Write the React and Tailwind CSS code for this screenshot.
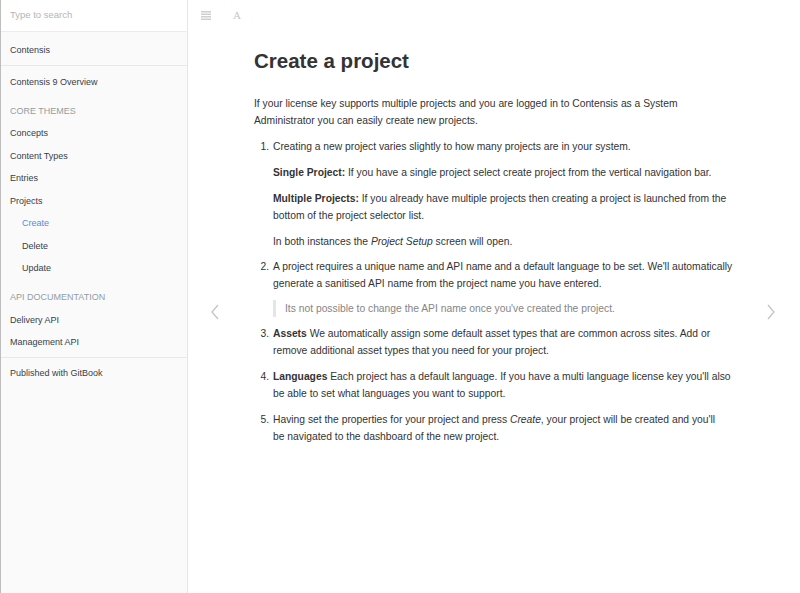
import React from "react";

const font = { fontFamily: '"Liberation Sans", Arial, sans-serif' };

function NavItem({ children, active, sub }) {
    return (
        <li
            className={
                "py-[5.75px] leading-[11px] text-[9px] " +
                (sub ? "pl-[21px] " : "pl-[9px] ") +
                (active ? "text-[#4a8fe7]" : "text-[#364149]")
            }
        >
            {children}
        </li>
    );
}

function NavHeader({ children }) {
    return (
        <li className="mt-[6.5px] py-[5.75px] pl-[9px] leading-[11px] text-[9px] uppercase text-[#939da3]">
            {children}
        </li>
    );
}

function Divider() {
    return <li className="mt-[3.4px] mb-[4.4px] h-px bg-[#e8e8e8]" />;
}

function Sidebar() {
    return (
        <div className="w-[188px] shrink-0 h-[593px] bg-[#fafafa] border-r border-[#e6e6e6] border-l border-l-[#bdbdbd]">
            <div className="h-[32px] bg-white border-b border-[#ececec] flex items-center pl-[9px] text-[9.5px] text-[#b5b5b5]">
                Type to search
            </div>
            <ul className="pt-[7.5px]">
                <NavItem>Contensis</NavItem>
                <Divider />
                <NavItem>Contensis 9 Overview</NavItem>
                <NavHeader>Core Themes</NavHeader>
                <NavItem>Concepts</NavItem>
                <NavItem>Content Types</NavItem>
                <NavItem>Entries</NavItem>
                <NavItem>Projects</NavItem>
                <NavItem sub active>Create</NavItem>
                <NavItem sub>Delete</NavItem>
                <NavItem sub>Update</NavItem>
                <NavHeader>API Documentation</NavHeader>
                <NavItem>Delivery API</NavItem>
                <NavItem>Management API</NavItem>
                <Divider />
                <NavItem>Published with GitBook</NavItem>
            </ul>
        </div>
    );
}

function Chevron({ left }) {
    return (
        <svg width="10" height="16" viewBox="0 0 10 16" fill="none" stroke="#c4c4c4" strokeWidth="1.3">
            {left ? <path d="M8 1 L2 8 L8 15" /> : <path d="M2 1 L8 8 L2 15" />}
        </svg>
    );
}

function Num({ n }) {
    return <span className="w-[19px] shrink-0 text-right pr-[4px]">{n}.</span>;
}

export default function App() {
    return (
        <div className="flex h-[593px] w-[800px] bg-white overflow-hidden" style={font}>
            <Sidebar />
            <div className="relative flex-1">
                {/* toolbar */}
                <div className="h-[31px] flex items-center pl-[13px] gap-[22px]">
                    <svg width="10" height="9" viewBox="0 0 10 9" fill="#cfcfcf">
                        <rect x="0" y="0" width="10" height="1.5" />
                        <rect x="0" y="2.5" width="10" height="1.5" />
                        <rect x="0" y="5" width="10" height="1.5" />
                        <rect x="0" y="7.5" width="10" height="1.5" />
                    </svg>
                    <span className="text-[11px] text-[#c7c7c7]" style={{ fontFamily: '"Liberation Serif", serif' }}>A</span>
                </div>

                <div className="absolute left-[22px] top-[304px]"><Chevron left /></div>
                <div className="absolute right-[24px] top-[304px]"><Chevron /></div>

                <div className="w-[480px] ml-[66px] text-[#333] text-[10.3px] leading-[17px]">
                    <h1 className="mt-[17px] text-[20.5px] font-bold leading-[26px] text-[#333]">Create a project</h1>
                    <p className="mt-[21px] mb-[8.5px]">
                        If your license key supports multiple projects and you are logged in to Contensis as a System<br />
                        Administrator you can easily create new projects.
                    </p>
                    <ol className="mt-[8px]">
                        <li className="flex">
                            <Num n={1} />
                            <div>
                                <p>Creating a new project varies slightly to how many projects are in your system.</p>
                                <p className="mt-[9px]"><b>Single Project:</b> If you have a single project select create project from the vertical navigation bar.</p>
                                <p className="mt-[9px]"><b>Multiple Projects:</b> If you already have multiple projects then creating a project is launched from the<br />bottom of the project selector list.</p>
                                <p className="mt-[9px]">In both instances the <i>Project Setup</i> screen will open.</p>
                            </div>
                        </li>
                        <li className="flex mt-[8px]">
                            <Num n={2} />
                            <div>
                                <p className="whitespace-nowrap">A project requires a unique name and API name and a default language to be set. We'll automatically<br />generate a sanitised API name from the project name you have entered.</p>
                                <blockquote className="mt-[8px] border-l-[3px] border-[#e5e5e5] pl-[9px] text-[#858585]">
                                    Its not possible to change the API name once you've created the project.
                                </blockquote>
                            </div>
                        </li>
                        <li className="flex mt-[8px]">
                            <Num n={3} />
                            <p><b>Assets</b> We automatically assign some default asset types that are common across sites. Add or<br />remove additional asset types that you need for your project.</p>
                        </li>
                        <li className="flex mt-[9px]">
                            <Num n={4} />
                            <p className="whitespace-nowrap"><b>Languages</b> Each project has a default language. If you have a multi language license key you'll also<br />be able to set what languages you want to support.</p>
                        </li>
                        <li className="flex mt-[9px]">
                            <Num n={5} />
                            <p>Having set the properties for your project and press <i>Create</i>, your project will be created and you'll<br />be navigated to the dashboard of the new project.</p>
                        </li>
                    </ol>
                </div>
            </div>
        </div>
    );
}
